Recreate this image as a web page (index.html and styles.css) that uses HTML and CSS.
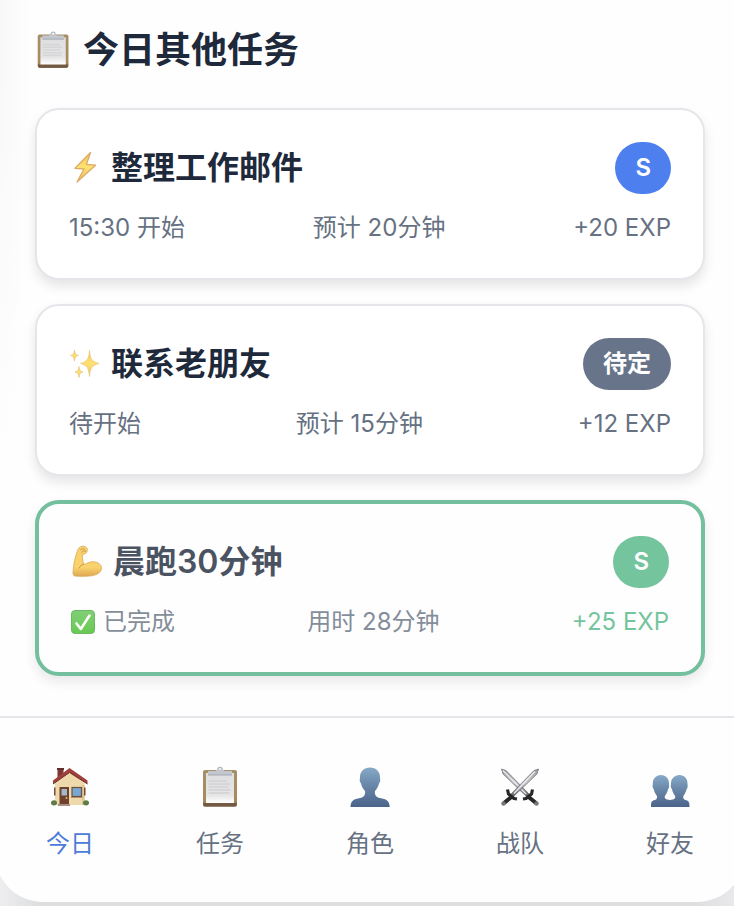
FILE: index.html
```html
<!DOCTYPE html>
<html lang="zh-CN">
<head>
  <meta charset="UTF-8">
  <meta name="viewport" content="width=device-width, initial-scale=1.0">
  <title>今日其他任务</title>
  <link rel="stylesheet" href="styles.css">
</head>
<body>
  <!-- 图标定义 -->
  <svg class="defs" width="0" height="0" aria-hidden="true">
    <defs>
      <linearGradient id="wood" x1="0" y1="0" x2="0" y2="1">
        <stop offset="0" stop-color="#a68f68"/>
        <stop offset="0.85" stop-color="#a88a5c"/>
        <stop offset="1" stop-color="#75573a"/>
      </linearGradient>
      <linearGradient id="paper" x1="0" y1="0" x2="0" y2="1">
        <stop offset="0" stop-color="#dedee0"/>
        <stop offset="0.75" stop-color="#e6e6e7"/>
        <stop offset="1" stop-color="#ffffff"/>
      </linearGradient>
      <linearGradient id="person" x1="0" y1="0" x2="0" y2="1">
        <stop offset="0" stop-color="#87a9c8"/>
        <stop offset="0.5" stop-color="#6684a6"/>
        <stop offset="1" stop-color="#4b648a"/>
      </linearGradient>
      <linearGradient id="gold" x1="0" y1="0" x2="0" y2="1">
        <stop offset="0" stop-color="#f3c75c"/>
        <stop offset="0.5" stop-color="#fde272"/>
        <stop offset="1" stop-color="#efc05c"/>
      </linearGradient>
      <linearGradient id="skin" x1="0" y1="0" x2="0" y2="1">
        <stop offset="0" stop-color="#f9c646"/>
        <stop offset="0.7" stop-color="#f9c948"/>
        <stop offset="1" stop-color="#d6922a"/>
      </linearGradient>
      <linearGradient id="tick" x1="0" y1="0" x2="0" y2="1">
        <stop offset="0" stop-color="#62c455"/>
        <stop offset="1" stop-color="#43bd28"/>
      </linearGradient>
      <linearGradient id="blade" x1="0" y1="0" x2="0" y2="1">
        <stop offset="0" stop-color="#9b9ba0"/>
        <stop offset="0.5" stop-color="#c5c5ca"/>
        <stop offset="1" stop-color="#5e5e63"/>
      </linearGradient>
      <symbol id="clipboard" viewBox="0 0 44 44">
        <rect x="5" y="4" width="34" height="36.500" rx="2" fill="url(#wood)"/>
        <path d="M5.500 37h33v2a1.500 1.500 0 0 1-1.500 1.500H7A1.500 1.500 0 0 1 5.500 39z" fill="#735a42"/>
        <rect x="8" y="7" width="28" height="30" fill="url(#paper)"/>
        <path d="M10.500 15h19M10.500 18h22M10.500 21h20M10.500 24h22M10.500 27h21" stroke="#d6d6d8" stroke-width="1.800"/>
        <circle cx="22" cy="3.500" r="2.200" fill="#fff" stroke="#aeb4be" stroke-width="1.300"/>
        <path d="M10 5h7.500l2-1.500h5l2 1.500H34v4H10z" fill="#c3c7cd"/>
        <path d="M10 9h24" stroke="#a3a9b2" stroke-width="1"/>
      </symbol>
    </defs>
  </svg>

  <div class="app">
    <main class="tasks">
      <h2 class="section-title">
        <svg class="title-icon" viewBox="2 0 42 42" aria-hidden="true"><use href="#clipboard" width="44" height="44"/></svg>
        今日其他任务
      </h2>

      <article class="card">
        <div class="card-head">
          <h3 class="card-title">
            <svg class="task-icon" viewBox="0 0 34 34" aria-hidden="true">
              <path d="M21.500 1.500 6 17.300l9 .7L8 31 26.500 14.200l-9-.8z" fill="url(#gold)" stroke="#dcab66" stroke-width="1.300" stroke-linejoin="round"/>
            </svg>
            整理工作邮件
          </h3>
          <span class="badge badge-blue">S</span>
        </div>
        <div class="card-meta">
          <span>15:30 开始</span>
          <span>预计 20分钟</span>
          <span>+20 EXP</span>
        </div>
      </article>

      <article class="card">
        <div class="card-head">
          <h3 class="card-title">
            <svg class="task-icon" viewBox="0 0 34 34" aria-hidden="true">
              <g fill="url(#gold)" stroke="#e6bd6c" stroke-width="0.600">
                <path d="M20.500 3.500c.8 8.500 2 11 9.500 13-7.500 2-8.700 4.500-9.500 13-.8-8.500-2-11-9-13 7-2 8.200-4.500 9-13z"/>
                <path d="M5.500 3c.5 3.800 1 4.700 4 5.500-3 .8-3.500 1.700-4 5.500-.5-3.800-1-4.700-4-5.500 3-.8 3.500-1.700 4-5.500z"/>
                <path d="M10 19.500c.5 3.800 1 4.700 4 5.500-3 .8-3.500 1.700-4 5.500-.5-3.800-1-4.700-4-5.500 3-.8 3.500-1.700 4-5.500z"/>
              </g>
            </svg>
            联系老朋友
          </h3>
          <span class="badge badge-gray">待定</span>
        </div>
        <div class="card-meta">
          <span>待开始</span>
          <span>预计 15分钟</span>
          <span>+12 EXP</span>
        </div>
      </article>

      <article class="card card-done">
        <div class="card-head">
          <h3 class="card-title">
            <svg class="task-icon" viewBox="0 0 34 34" aria-hidden="true">
              <path d="M7 4.500C8 2.200 10.500.8 13 1.300c2.300.4 3.500 2 3.300 4-.2 1.900-1 3.200-2.600 3.600-.8.200-1.400.1-1.900.1-.5 3-.3 6.500.9 10.300 1.300 0 2.500-.6 4-1.400 3-1.400 7-1.700 10.200 0 2.700 1.400 4 3.600 3.500 6.200-.8 4.200-6 6.700-12.700 7-5 .2-10.500.4-14.200-.2-1-.4-1.600-1.600-1.500-3.400C2.400 20 4 11.500 7 4.500z" fill="url(#skin)" stroke="#cd942f" stroke-width="0.800"/>
              <path d="M9.500 5c1-1.300 2.500-1.700 4-.8M11 7.200c.6-1.300 2-1.700 3.500-.9M12.700 19.300c-2 .6-3.700 1.600-4.700 3.700" fill="none" stroke="#b67c28" stroke-width="1" stroke-linecap="round"/>
            </svg>
            晨跑30分钟
          </h3>
          <span class="badge badge-green">S</span>
        </div>
        <div class="card-meta">
          <span class="done-label">
            <svg class="tick-icon" viewBox="0 0 24 24" aria-hidden="true">
              <rect x="0.500" y="0.500" width="23" height="23" rx="3.500" fill="url(#tick)" stroke="#48a83e"/>
              <path d="M5.500 13.500 9.800 19 18.500 5.500" fill="none" stroke="#fff" stroke-width="2.600" stroke-linecap="round" stroke-linejoin="round"/>
            </svg>
            已完成
          </span>
          <span>用时 28分钟</span>
          <span class="exp-done">+25 EXP</span>
        </div>
      </article>
    </main>

    <nav class="tabbar">
      <a class="tab active" href="#today">
        <svg class="tab-icon" viewBox="0 0 44 44" aria-hidden="true">
          <path d="M9.500 3h6v12h-6z" fill="#7c3733"/>
          <path d="M9 2h7v2H9z" fill="#61302d"/>
          <path d="M7 17 21.500 4 36.500 17v22H7z" fill="#edd9ac"/>
          <path d="M34 19h2.500v20H34z" fill="#dcc596"/>
          <path d="M21.500 2 5 14.500v3.500L21.500 6.500 39.500 18v-3.500z" fill="#a13f3d"/>
          <path d="M5 18 21.500 6.500l18 11.500" fill="none" stroke="#6b2b2b" stroke-width="1"/>
          <path d="M36 21.500h1.500v8H36zM6 21.500h1.500v8H6z" fill="#7b4a36"/>
          <rect x="11.500" y="21" width="9.500" height="18" fill="#70402d"/>
          <rect x="13.500" y="23" width="5.500" height="6.500" fill="#9fb8ca"/>
          <circle cx="18.500" cy="32" r="1" fill="#e1bd69"/>
          <rect x="24" y="21.500" width="9.500" height="9" fill="#78a7d1" stroke="#70503d" stroke-width="1.200"/>
          <path d="M23 31.500h11.500" stroke="#b1926b" stroke-width="1"/>
          <path d="M10 38h12v2H10z" fill="#a59181"/>
          <ellipse cx="6" cy="36.800" rx="3" ry="2.600" fill="#5d7d44"/>
          <ellipse cx="38" cy="36.800" rx="3" ry="2.600" fill="#5d7d44"/>
        </svg>
        <span>今日</span>
      </a>
      <a class="tab" href="#tasks">
        <svg class="tab-icon" viewBox="0 0 44 44" aria-hidden="true"><use href="#clipboard" width="44" height="44"/></svg>
        <span>任务</span>
      </a>
      <a class="tab" href="#role">
        <svg class="tab-icon" viewBox="0 0 44 44" aria-hidden="true">
          <path d="M22 1.500c6 0 10 4.200 10 9.500 0 1.600.4 2.200.2 3.800-.1 1.200-.6 1.800-1.200 2.700-.7 3.200-2 5.300-4 7.500-.6 3.500.8 6.300 5 7 6 1 9.500 2.500 9.700 9H2.500c.2-6.500 3.500-8 9.500-9 4.200-.7 5.600-3.500 5-7-2-2.200-3.300-4.300-4-7.500-.6-.9-1.100-1.500-1.200-2.700-.2-1.600.2-2.200.2-3.800 0-5.300 4-9.500 10-9.500z" fill="url(#person)"/>
        </svg>
        <span>角色</span>
      </a>
      <a class="tab" href="#team">
        <svg class="tab-icon" viewBox="0 0 44 44" aria-hidden="true">
          <path d="M3.500 3 8 4.500 31 28l-2.500 2.500L5 8z" fill="url(#blade)" stroke="#5a5a5f" stroke-width="0.600"/>
          <path d="M5 4.500 28 28" stroke="#ececf0" stroke-width="1.200"/>
          <path d="M40.500 3 36 4.500 13 28l2.500 2.500L39 8z" fill="url(#blade)" stroke="#5a5a5f" stroke-width="0.600"/>
          <path d="M37 5.500 16 27.500" stroke="#ececf0" stroke-width="1.200"/>
          <g fill="none" stroke="#272729" stroke-linejoin="round">
            <path d="M9.500 23.500l1 4.500 5.500 4.500 3 .5M34.500 23.500l-1 4.500-5.500 4.500-3 .5" stroke-width="3.200"/>
            <path d="M14 30.500l-8 6.500M30 30.500l8 6.500" stroke-width="4"/>
          </g>
          <circle cx="5.500" cy="37.500" r="2.200" fill="#77777b"/>
          <circle cx="38.500" cy="37.500" r="2.200" fill="#77777b"/>
        </svg>
        <span>战队</span>
      </a>
      <a class="tab" href="#friends">
        <svg class="tab-icon" viewBox="0 0 44 44" aria-hidden="true">
          <path d="M13 9c5 0 8 3.600 8 8.500 0 1.500.4 2.500 0 4-.2.800-.6 1.200-1 1.800-.6 2.700-1.500 4.700-3.200 6.700-.4 2.500.7 3.700 5.200 4 4.500-.3 5.600-1.500 5.200-4-1.700-2-2.600-4-3.200-6.700-.4-.6-.8-1-1-1.800-.4-1.500 0-2.500 0-4C23 12.600 26.500 9 31.500 9s8 3.600 8 8.500c0 1.500.4 2.500 0 4-.2.800-.6 1.200-1 1.800-.6 2.700-1.500 4.700-3.200 6.700-.3 2.500.5 3.900 3 4.300 2.600.5 3.200 2.200 3.200 6.700H3c0-4.500.5-6.200 3-6.700 2.500-.4 3.300-1.800 3-4.300-1.700-2-2.600-4-3.200-6.700-.4-.6-.8-1-1-1.800-.4-1.500 0-2.500 0-4C4.800 12.600 8 9 13 9z" fill="url(#person)"/>
        </svg>
        <span>好友</span>
      </a>
    </nav>
  </div>
</body>
</html>
```

FILE: styles.css
```css
* {
  box-sizing: border-box;
}

body {
  margin: 0;
  min-height: 100vh;
  background: linear-gradient(90deg, #eeeef0, #dddee0 40px, #dddee0 calc(100% - 40px), #e9e9eb);
  font-family: Inter, "Noto Sans CJK SC", sans-serif;
  font-size: 24px;
  line-height: 36px;
  color: #1e293b;
  overflow: hidden;
}

h2,
h3 {
  margin: 0;
  font-weight: 600;
}

.defs {
  position: absolute;
}

/* 外壳比窗口略宽，两侧圆角会被裁掉一部分 */
.app {
  margin: 0 -11px 0 -5px;
  border-radius: 0 0 48px 48px;
  background: #fefefe;
  overflow: hidden;
}

.tasks {
  display: flex;
  flex-direction: column;
  gap: 24px;
  padding: 24px 40px 40px;
  background: radial-gradient(ellipse 36px 480px at 0 0, #f7f7f8, #fefefe);
}

.section-title {
  display: flex;
  align-items: center;
  gap: 10px;
  margin-bottom: 8px;
  font-size: 36px;
  line-height: 52px;
}

.title-icon {
  width: 38px;
  height: 38px;
}

/* 任务卡片 */
.card {
  padding: 32px;
  border: 2px solid #e5e6ea;
  border-radius: 24px;
  background: #fff;
  box-shadow: 0 6px 12px rgba(0, 0, 0, 0.1);
}

.card-done {
  border: 4px solid #52b087;
  opacity: 0.8;
}

.card-head {
  display: flex;
  justify-content: space-between;
  align-items: center;
  margin-bottom: 16px;
}

.card-title {
  display: flex;
  align-items: center;
  gap: 8px;
  font-size: 32px;
  line-height: 48px;
}

.task-icon {
  width: 34px;
  height: 34px;
}

.badge {
  padding: 8px 20px;
  border-radius: 26px;
  color: #fff;
  font-weight: 600;
}

.badge-blue {
  background: #4d80ee;
}

.badge-gray {
  background: #677489;
}

.badge-green {
  background: #52b685;
}

.card-meta {
  display: flex;
  justify-content: space-between;
  color: #667182;
}

.done-label {
  display: flex;
  align-items: center;
  gap: 8px;
}

.tick-icon {
  width: 24px;
  height: 24px;
}

.exp-done {
  color: #52b685;
}

/* 底部导航 */
.tabbar {
  display: grid;
  grid-template-columns: repeat(5, 1fr);
  padding: 48px 0 40px;
  border-top: 2px solid #e5e6ea;
}

.tab {
  display: flex;
  flex-direction: column;
  align-items: center;
  gap: 16px;
  color: #667182;
  text-decoration: none;
}

.tab.active {
  color: #4d7bd8;
}

.tab-icon {
  width: 44px;
  height: 44px;
}
```
